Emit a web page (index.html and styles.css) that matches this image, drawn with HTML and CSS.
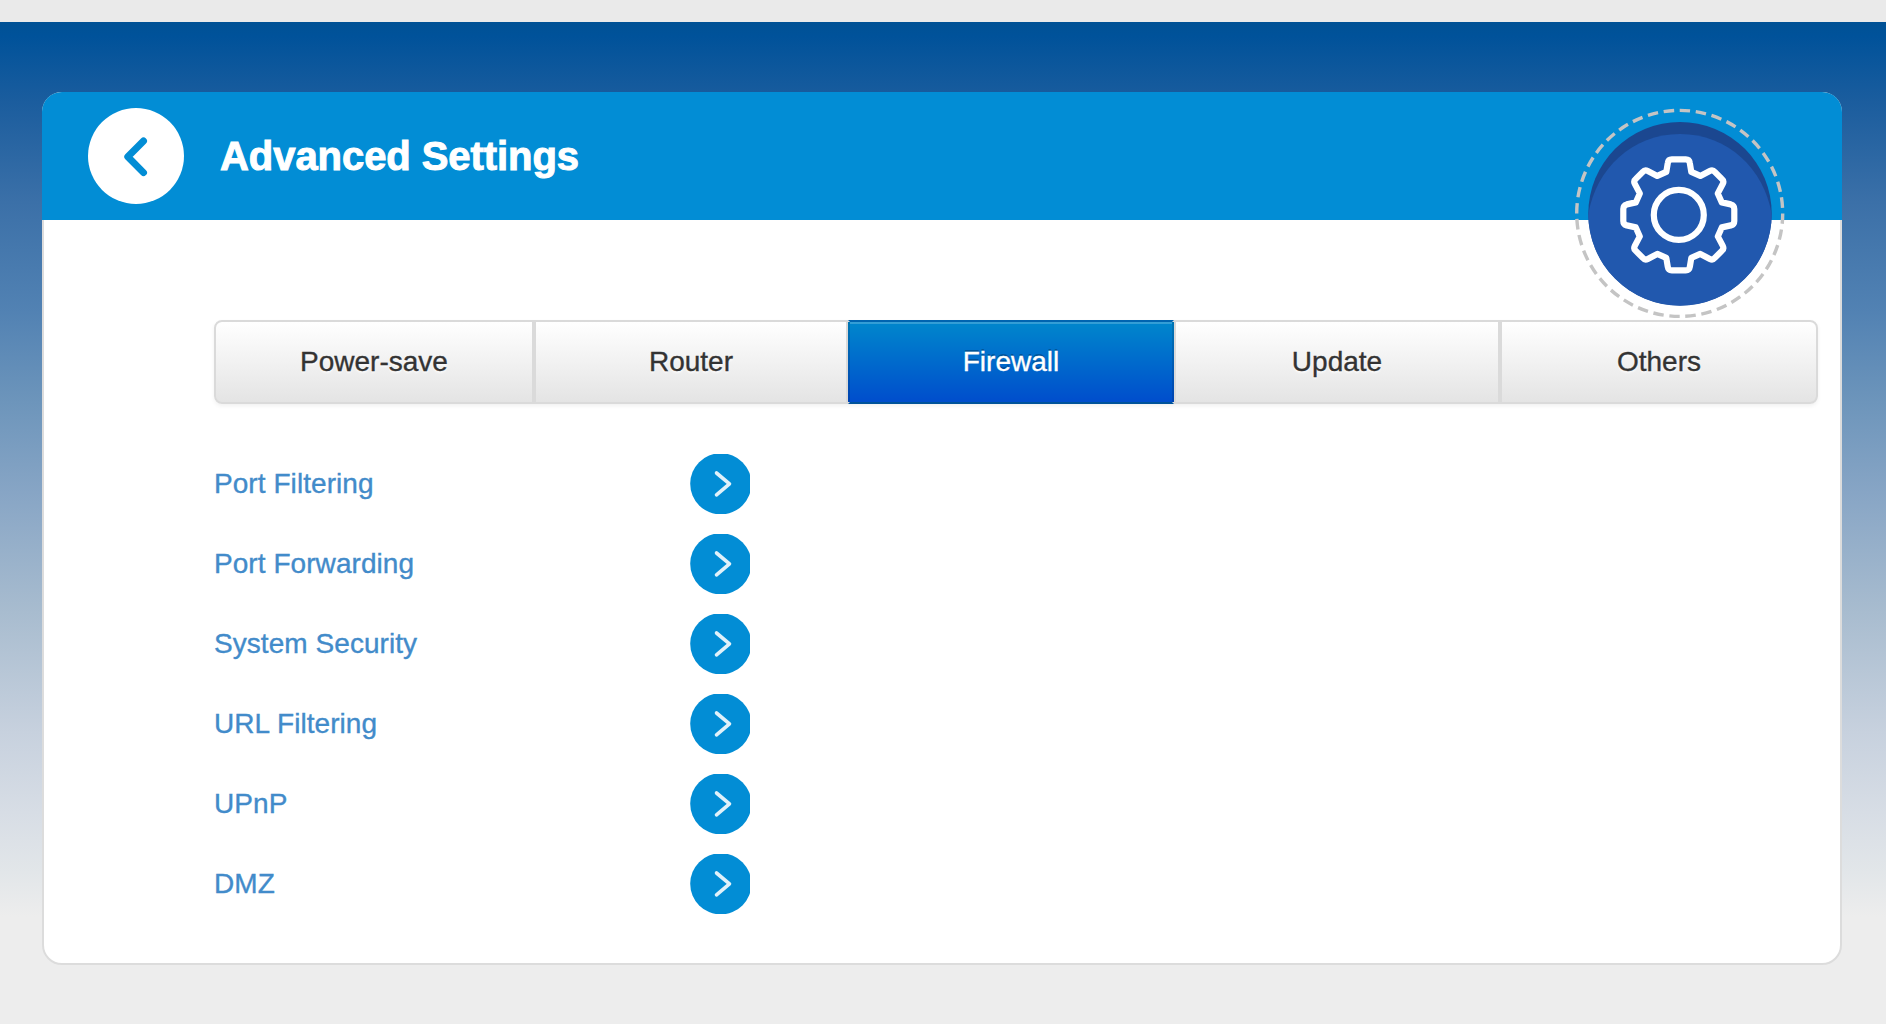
FILE: index.html
```html
<!DOCTYPE html>
<html lang="en">
<head>
<meta charset="utf-8">
<title>Advanced Settings</title>
<link rel="stylesheet" href="styles.css">
</head>
<body>
<svg class="symbols" aria-hidden="true">
  <symbol id="chevron" viewBox="0 0 60 60">
    <circle cx="30.8" cy="29.8" r="30.6" fill="#028dd5"/>
    <path d="M26.5 19 39.500 29.800 26.500 40.800" fill="none" stroke="#e0f1fa" stroke-width="3.600" stroke-linecap="round" stroke-linejoin="round"/>
  </symbol>
</svg>
<div class="topbar"></div>
<main class="page">
  <section class="card">
    <header class="card-header">
      <a class="back" href="#" aria-label="Back">
        <svg viewBox="0 0 96 96"><circle cx="48" cy="48" r="48" fill="#fff"/><path d="M55.500 33 39.800 48.800 55.500 64.600" fill="none" stroke="#028dd5" stroke-width="7" stroke-linecap="round" stroke-linejoin="round"/></svg>
      </a>
      <h1>Advanced Settings</h1>
      <svg class="badge" viewBox="-106 -106 212 212">
        <circle class="ring" cx="-.3" cy="-.6" r="103" pathLength="400"/>
        <circle cy="-.3" r="91.700" fill="#1b4790"/>
        <path d="M-91.700 0C-84-45-48-80 0-80S84-45 91.700 0A91.700 91.700 0 0 1-91.700 0Z" fill="#2158ae"/>
        <g class="gear" transform="translate(-1.200 .900)">
          <circle r="25"/>
          <path d="M-7-55.500H7Q10.500-55.500 11-52L12.500-43 21.500-39 31-44Q34-45.500 36-43L43-36Q45.500-34 44-31L39-21.500 43-12.500 52-10.500Q55.500-9.500 55.500-6V6Q55.500 9.500 52 10.500L43 12.500 39 21.500 44 31Q45.500 34 43 36L36 43Q34 45.500 31 44L21.500 39 12.500 43 11 52Q10.500 55.500 7 55.500H-7Q-10.500 55.500-11 52L-12.500 43-21.500 39-31 44Q-34 45.500-36 43L-43 36Q-45.500 34-44 31L-39 21.500-43 12.500-52 10.500Q-55.500 9.500-55.500 6V-6Q-55.500-9.500-52-10.500L-43-12.500-39-21.500-44-31Q-45.500-34-43-36L-36-43Q-34-45.500-31-44L-21.500-39-12.500-43-11-52Q-10.500-55.500-7-55.500Z"/>
        </g>
      </svg>
    </header>
    <nav class="tabs">
      <a class="tab" href="#">Power-save</a>
      <a class="tab" href="#">Router</a>
      <a class="tab active" href="#">Firewall</a>
      <a class="tab" href="#">Update</a>
      <a class="tab" href="#">Others</a>
    </nav>
    <ul class="options">
      <li><a href="#"><span>Port Filtering</span><svg><use href="#chevron"/></svg></a></li>
      <li><a href="#"><span>Port Forwarding</span><svg><use href="#chevron"/></svg></a></li>
      <li><a href="#"><span>System Security</span><svg><use href="#chevron"/></svg></a></li>
      <li><a href="#"><span>URL Filtering</span><svg><use href="#chevron"/></svg></a></li>
      <li><a href="#"><span>UPnP</span><svg><use href="#chevron"/></svg></a></li>
      <li><a href="#"><span>DMZ</span><svg><use href="#chevron"/></svg></a></li>
    </ul>
  </section>
</main>
</body>
</html>
```
FILE: styles.css
```css
* { box-sizing: border-box; }

body {
  margin: 0;
  background: #ededed;
  font-family: "Liberation Sans", Arial, sans-serif;
  font-size: 28px;
  color: #333;
}

a { color: inherit; text-decoration: none; }

.symbols { display: none; }

.topbar { height: 22px; background: #eaeaea; }

.page {
  height: 1002px;
  padding: 70px 44px 59px 42px;
  background: #ededed linear-gradient(#005195 0, #00529a 14px, #1b5d9e 80px, #3b70a8 180px, #5282b3 290px, #6d95bb 380px, #87a5c5 470px, #a8bccf 590px, #c7d1de 710px, #d7dde5 790px, #e2e6e9 850px, #ededed 895px) no-repeat;
}

.card {
  height: 873px;
  background: #fff;
  border: 2px solid #dcdcdc;
  border-radius: 20px;
}

.card-header {
  position: relative;
  display: flex;
  align-items: center;
  gap: 36px;
  height: 128px;
  margin: -2px -2px 0;
  padding-left: 46px;
  background: #028dd5;
  border-radius: 20px 20px 0 0;
}

.back { display: flex; }
.back svg { width: 96px; height: 96px; }

h1 {
  margin: 0;
  color: #fff;
  font-size: 40px;
  font-weight: 700;
  letter-spacing: -0.06px;
  line-height: 44px;
  -webkit-text-stroke: 1px #fff;
}

.badge {
  position: absolute;
  top: 16px;
  right: 56px;
  width: 212px;
  height: 212px;
}

.ring { fill: none; stroke: #c4c4c4; stroke-width: 3.4; stroke-dasharray: 6.5 3.5; }

.gear { fill: none; stroke: #fff; stroke-width: 6.2; stroke-linejoin: round; }

.tabs {
  display: grid;
  grid-template-columns: 320px 314px 326px 326px 318px;
  width: 1604px;
  height: 84px;
  margin: 100px 0 0 170px;
  border-radius: 8px;
  box-shadow: 0 2px 4px rgba(0, 0, 0, 0.06);
}

.tab {
  display: flex;
  align-items: center;
  justify-content: center;
  border: 2px solid #dadada;
  background: linear-gradient(#fff, #e4e4e4);
  text-shadow: 0 2px 2px rgba(255, 255, 255, 0.75);
  -webkit-text-stroke: 0.35px currentColor;
}

.tab:first-child { border-radius: 8px 0 0 8px; }
.tab:last-child { border-radius: 0 8px 8px 0; }

.tab.active {
  color: #fff;
  border-color: #0064b0 rgba(0, 0, 0, 0.12) #00539a;
  background: linear-gradient(#0088cc, #004ccc) border-box;
  box-shadow: inset 0 2px rgba(255, 255, 255, 0.2);
  text-shadow: 0 -2px rgba(0, 0, 0, 0.25);
}

.options {
  display: grid;
  gap: 20px;
  margin: 50px 0 0 170px;
  padding: 0;
  list-style: none;
}

.options a {
  display: grid;
  grid-template-columns: 476px 60px;
  align-items: center;
  height: 60px;
  color: #428bca;
}

.options span {
  letter-spacing: 0.06px;
  -webkit-text-stroke: 0.35px currentColor;
}

.options svg { width: 60px; height: 60px; }
```
